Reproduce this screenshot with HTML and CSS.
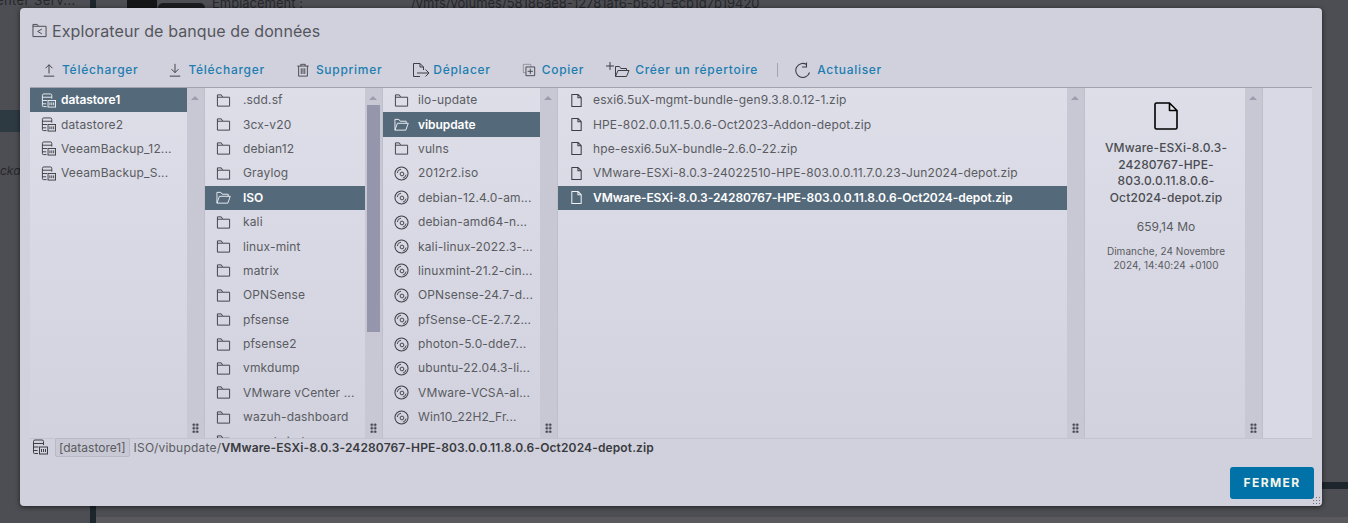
FILE: index.html
```html
<!DOCTYPE html>
<html lang="fr">
<head>
  <meta charset="UTF-8">
  <title>Explorateur de banque de données</title>
  <link rel="stylesheet" href="styles.css">
</head>
<body>
  <svg class="defs" width="0" height="0">
    <symbol id="i-folder" viewBox="0 0 16 16"><path d="M1.500 14V2h4.200l1.400 2.500h7.400V14z M1.500 4.500h5.600" fill="none" stroke="currentColor" stroke-width="1"/></symbol>
    <symbol id="i-open" viewBox="0 0 16 16"><path d="M1 14V2.500h4.200l1.400 2h6.400v2.200 M1 14l2.600-7.300h11.600L12.600 14z" fill="none" stroke="currentColor" stroke-width="1"/></symbol>
    <symbol id="i-disc" viewBox="0 0 16 16"><g fill="none" stroke="currentColor"><circle cx="8" cy="8" r="7" stroke-width="1.100"/><circle cx="8.500" cy="8.500" r="2" stroke-width="1"/><path d="M3.400 7.500A4.700 4.700 0 0 1 7.500 3.400 M12.900 9.200A4.600 4.600 0 0 1 9.500 12.900" stroke-width="1"/></g></symbol>
    <symbol id="i-file" viewBox="0 0 16 16"><path d="M3 1.500h6.500L13 5v9.500H3z M9.500 1.500V5H13" fill="none" stroke="currentColor" stroke-width="1.100" stroke-linejoin="round"/></symbol>
    <symbol id="i-bigfile" viewBox="0 0 24 28"><path d="M15 1.500V8h7.500z" fill="#eceded"/><path d="M2.500 1h13L23 8.500V25.500a1.500 1.500 0 0 1-1.500 1.500h-19A1.500 1.500 0 0 1 1 25.500V2.500A1.500 1.500 0 0 1 2.500 1z M15.500 1v7.500H23" fill="none" stroke="currentColor" stroke-width="1.600" stroke-linejoin="round"/></symbol>
    <symbol id="i-store" viewBox="0 0 16 16"><g fill="none" stroke="currentColor" stroke-width="1"><path d="M6 14.500H2.500a1 1 0 0 1-1-1V2.500a1.500 1.500 0 0 1 1.500-1.500h7a1.500 1.500 0 0 1 1.500 1.500V6"/><path d="M1.500 4.500h10 M1.500 8h5 M1.500 11.500h4"/><rect x="7.500" y="8" width="8" height="7"/><path d="M9.500 10v3 M11.500 10v3 M13.500 10v3"/></g></symbol>
    <symbol id="i-upload" viewBox="0 0 16 16"><path d="M8 12V2 M4 6l4-4 4 4 M2 15h12" fill="none" stroke="currentColor" stroke-width="1.100"/></symbol>
    <symbol id="i-download" viewBox="0 0 16 16"><path d="M8 1v10 M4 7l4 4 4-4 M2 15h12" fill="none" stroke="currentColor" stroke-width="1.100"/></symbol>
    <symbol id="i-trash" viewBox="0 0 16 16"><path d="M1.500 3.500h13 M5.500 3.500V1.500h5v2 M3 3.500V15h10V3.500 M6 6v6.500 M8 6v6.500 M10 6v6.500" fill="none" stroke="currentColor" stroke-width="1"/></symbol>
    <symbol id="i-move" viewBox="0 0 18 16"><path d="M8 14.500H1.500V1.500H8l3.500 3.500V8 M8 1.500V5h3.500 M5 11h12 M13.500 7.500L17 11l-3.500 3.500" fill="none" stroke="currentColor" stroke-width="1"/></symbol>
    <symbol id="i-copy" viewBox="0 0 16 16"><path d="M4 11H1.500V1.500H10V4" fill="none" stroke="#8d8e96" stroke-width="1"/><path d="M4.500 4.500h10v10h-10z M9.500 6.500v6 M6.500 9.500h6" fill="none" stroke="currentColor" stroke-width="1"/></symbol>
    <symbol id="i-newdir" viewBox="0 0 24 16"><path d="M4 0v8 M0 4h8" fill="none" stroke="currentColor" stroke-width="1"/><path d="M9.500 14.500V4.500h4l1.300 2h5.700v2 M9.500 14.500l2.500-6h11l-2.500 6z" fill="none" stroke="currentColor" stroke-width="1"/></symbol>
    <symbol id="i-refresh" viewBox="0 0 16 16"><path d="M14.500 10.500A7 7 0 1 1 11.500 2.500 M11.500 .5v4.500h-4.500" fill="none" stroke="currentColor" stroke-width="1.100"/></symbol>
    <symbol id="i-explorer" viewBox="0 0 16 16"><path d="M1 14.500V1.500h4.500l1.500 2h8v11z M1 3.500h6 M10.500 6.500L6 9l4.500 2.500" fill="none" stroke="currentColor" stroke-width="1"/></symbol>
  </svg>

  <div class="backdrop">
    <span class="bg-service">enter Serv...</span>
    <span class="bg-place">Emplacement :</span>
    <span class="bg-path">/vmfs/volumes/58186ae8-12781af6-b630-ecb1d7b19420</span>
    <span class="bg-icon"></span>
    <span class="bg-thumb"></span>
    <span class="bg-side"></span>
    <span class="bg-pack">ckag</span>
    <span class="bg-rail"></span>
    <span class="bg-strip"></span>
    <span class="bg-line"></span>
  </div>

  <div class="dialog">
    <h1 class="title"><svg class="ic-title"><use href="#i-explorer"/></svg>Explorateur de banque de données</h1>

    <div class="toolbar">
      <a class="tool tool-up"><svg class="ic"><use href="#i-upload"/></svg>Télécharger</a>
      <a class="tool tool-down"><svg class="ic"><use href="#i-download"/></svg>Télécharger</a>
      <a class="tool tool-del"><svg class="ic"><use href="#i-trash"/></svg>Supprimer</a>
      <a class="tool tool-move"><svg class="ic-wide"><use href="#i-move"/></svg>Déplacer</a>
      <a class="tool tool-copy"><svg class="ic"><use href="#i-copy"/></svg>Copier</a>
      <a class="tool tool-new"><svg class="ic-new"><use href="#i-newdir"/></svg>Créer un répertoire</a>
      <span class="sep"></span>
      <a class="tool tool-refresh"><svg class="ic-refresh"><use href="#i-refresh"/></svg>Actualiser</a>
    </div>

    <div class="browser">
      <div class="col col-stores">
        <ul class="list">
          <li class="row sel"><svg class="ic-row"><use href="#i-store"/></svg>datastore1</li>
          <li class="row"><svg class="ic-row"><use href="#i-store"/></svg>datastore2</li>
          <li class="row"><svg class="ic-row"><use href="#i-store"/></svg><span class="name">VeeamBackup_12...</span></li>
          <li class="row"><svg class="ic-row"><use href="#i-store"/></svg><span class="name">VeeamBackup_S...</span></li>
        </ul>
        <div class="scroll"><i class="arrow"></i><i class="grip"></i></div>
      </div>

      <div class="col col-dirs">
        <ul class="list">
          <li class="row"><svg class="ic-row"><use href="#i-folder"/></svg>.sdd.sf</li>
          <li class="row"><svg class="ic-row"><use href="#i-folder"/></svg>3cx-v20</li>
          <li class="row"><svg class="ic-row"><use href="#i-folder"/></svg>debian12</li>
          <li class="row"><svg class="ic-row"><use href="#i-folder"/></svg>Graylog</li>
          <li class="row sel"><svg class="ic-row"><use href="#i-open"/></svg>ISO</li>
          <li class="row"><svg class="ic-row"><use href="#i-folder"/></svg>kali</li>
          <li class="row"><svg class="ic-row"><use href="#i-folder"/></svg>linux-mint</li>
          <li class="row"><svg class="ic-row"><use href="#i-folder"/></svg>matrix</li>
          <li class="row"><svg class="ic-row"><use href="#i-folder"/></svg>OPNSense</li>
          <li class="row"><svg class="ic-row"><use href="#i-folder"/></svg>pfsense</li>
          <li class="row"><svg class="ic-row"><use href="#i-folder"/></svg>pfsense2</li>
          <li class="row"><svg class="ic-row"><use href="#i-folder"/></svg>vmkdump</li>
          <li class="row"><svg class="ic-row"><use href="#i-folder"/></svg><span class="name">VMware vCenter ...</span></li>
          <li class="row"><svg class="ic-row"><use href="#i-folder"/></svg>wazuh-dashboard</li>
          <li class="row"><svg class="ic-row"><use href="#i-folder"/></svg>wazuh-indexer</li>
        </ul>
        <div class="scroll"><i class="arrow"></i><i class="thumb"></i><i class="grip"></i></div>
      </div>

      <div class="col col-iso">
        <ul class="list">
          <li class="row"><svg class="ic-row"><use href="#i-folder"/></svg>ilo-update</li>
          <li class="row sel"><svg class="ic-row"><use href="#i-open"/></svg>vibupdate</li>
          <li class="row"><svg class="ic-row"><use href="#i-folder"/></svg>vulns</li>
          <li class="row"><svg class="ic-row"><use href="#i-disc"/></svg>2012r2.iso</li>
          <li class="row"><svg class="ic-row"><use href="#i-disc"/></svg><span class="name">debian-12.4.0-am...</span></li>
          <li class="row"><svg class="ic-row"><use href="#i-disc"/></svg><span class="name">debian-amd64-n...</span></li>
          <li class="row"><svg class="ic-row"><use href="#i-disc"/></svg><span class="name">kali-linux-2022.3-...</span></li>
          <li class="row"><svg class="ic-row"><use href="#i-disc"/></svg><span class="name">linuxmint-21.2-cin...</span></li>
          <li class="row"><svg class="ic-row"><use href="#i-disc"/></svg><span class="name">OPNsense-24.7-d...</span></li>
          <li class="row"><svg class="ic-row"><use href="#i-disc"/></svg><span class="name">pfSense-CE-2.7.2...</span></li>
          <li class="row"><svg class="ic-row"><use href="#i-disc"/></svg><span class="name">photon-5.0-dde7...</span></li>
          <li class="row"><svg class="ic-row"><use href="#i-disc"/></svg><span class="name">ubuntu-22.04.3-li...</span></li>
          <li class="row"><svg class="ic-row"><use href="#i-disc"/></svg><span class="name">VMware-VCSA-al...</span></li>
          <li class="row"><svg class="ic-row"><use href="#i-disc"/></svg><span class="name">Win10_22H2_Fr...</span></li>
        </ul>
        <div class="scroll"><i class="arrow"></i><i class="grip"></i></div>
      </div>

      <div class="col col-files">
        <ul class="list">
          <li class="row"><svg class="ic-row"><use href="#i-file"/></svg>esxi6.5uX-mgmt-bundle-gen9.3.8.0.12-1.zip</li>
          <li class="row"><svg class="ic-row"><use href="#i-file"/></svg>HPE-802.0.0.11.5.0.6-Oct2023-Addon-depot.zip</li>
          <li class="row"><svg class="ic-row"><use href="#i-file"/></svg>hpe-esxi6.5uX-bundle-2.6.0-22.zip</li>
          <li class="row"><svg class="ic-row"><use href="#i-file"/></svg>VMware-ESXi-8.0.3-24022510-HPE-803.0.0.11.7.0.23-Jun2024-depot.zip</li>
          <li class="row sel"><svg class="ic-row"><use href="#i-file"/></svg>VMware-ESXi-8.0.3-24280767-HPE-803.0.0.11.8.0.6-Oct2024-depot.zip</li>
        </ul>
        <div class="scroll"><i class="arrow"></i><i class="grip"></i></div>
      </div>

      <div class="col col-preview">
        <div class="preview">
          <svg class="ic-big"><use href="#i-bigfile"/></svg>
          <div class="pv-name">VMware-ESXi-8.0.3-24280767-HPE-803.0.0.11.8.0.6-Oct2024-depot.zip</div>
          <div class="pv-size">659,14 Mo</div>
          <div class="pv-date">Dimanche, 24 Novembre 2024, 14:40:24 +0100</div>
        </div>
        <div class="scroll"><i class="arrow"></i><i class="grip"></i></div>
      </div>

      <div class="col-rest"></div>
    </div>

    <div class="pathbar">
      <svg class="ic-path"><use href="#i-store"/></svg>
      <span class="tag">[datastore1]</span>
      <span class="path">ISO/vibupdate/<b>VMware-ESXi-8.0.3-24280767-HPE-803.0.0.11.8.0.6-Oct2024-depot.zip</b></span>
    </div>

    <div class="footer"><button class="close" type="button">FERMER</button></div>
    <i class="resize"></i>
  </div>
</body>
</html>
```

FILE: styles.css
```css
* {
  box-sizing: border-box;
}
html, body {
  margin: 0;
  height: 100%;
}
body {
  position: relative;
  overflow: hidden;
  background: #4d4e53;
  font-family: Inter, "Liberation Sans", sans-serif;
  color: #5a5b61;
}
.defs {
  position: absolute;
}

/* page behind the modal */
.backdrop span {
  position: absolute;
  white-space: nowrap;
}
.bg-service {
  left: -4px;
  top: -8px;
  font-size: 13px;
  letter-spacing: 0.4px;
  color: #26272b;
}
.bg-place {
  left: 212px;
  top: -5px;
  font-size: 13px;
  color: #26272b;
}
.bg-path {
  left: 411px;
  top: -5px;
  font-size: 13px;
  color: #26272b;
}
.bg-icon {
  left: 127px;
  top: 0;
  width: 30px;
  height: 8px;
  background: #141517;
}
.bg-thumb {
  left: 158px;
  top: 3px;
  width: 47px;
  height: 5px;
  border-radius: 5px 5px 0 0;
  background: #1b1c1f;
}
.bg-side {
  left: 0;
  top: 110px;
  width: 20px;
  height: 22px;
  background: #2e3a42;
}
.bg-pack {
  left: 0;
  top: 163px;
  font-size: 12px;
  font-style: italic;
  color: #26272b;
}
.bg-rail {
  left: 90px;
  top: 0;
  width: 6px;
  height: 523px;
  background: #1d262c;
}
.bg-strip {
  left: 96px;
  top: 517px;
  width: 1252px;
  height: 6px;
  background: #5a5a5e;
}
.bg-line {
  left: 1322px;
  top: 482px;
  width: 26px;
  height: 7px;
  background: #1d262c;
}

/* modal */
.dialog {
  position: absolute;
  left: 20px;
  top: 8px;
  width: 1302px;
  height: 498px;
  padding: 0 10px;
  background: #d0d1dd;
  border-radius: 4px;
  box-shadow: 0 1px 5px rgba(0, 0, 0, 0.6);
}
.title {
  display: flex;
  align-items: center;
  height: 45px;
  margin: 0;
  padding-left: 2px;
  font-size: 16px;
  font-weight: 400;
  letter-spacing: 0.1px;
  color: #55565c;
}
.ic-title {
  width: 15px;
  height: 15px;
  margin-right: 5px;
  color: #44454b;
}
.toolbar {
  display: flex;
  align-items: center;
  height: 33px;
  margin-bottom: 1px;
}
.tool {
  display: flex;
  align-items: center;
  font-size: 12px;
  font-weight: 500;
  letter-spacing: 0.72px;
  color: #1d7db0;
  white-space: nowrap;
}
.tool svg {
  color: #3d3e44;
}
.ic {
  width: 14px;
  height: 14px;
  margin-right: 6px;
}
.ic-wide {
  width: 18px;
  height: 16px;
  margin-right: 3px;
}
.ic-new {
  width: 24px;
  height: 16px;
  margin-right: 5px;
}
.ic-refresh {
  width: 16px;
  height: 16px;
  margin-right: 6px;
}
.tool-up { margin-left: 12px; }
.tool-down { margin-left: 30px; }
.tool-del { margin-left: 31px; }
.tool-move { margin-left: 30px; }
.tool-copy { margin-left: 31px; }
.tool-new { margin-left: 22px; }
.sep {
  width: 1px;
  height: 14px;
  margin: 0 17px 0 19px;
  background: #a3a4ae;
}
.browser {
  display: flex;
  height: 352px;
  border-top: 1px solid #a2a3ad;
  border-bottom: 1px solid #c3c4d0;
}
.col {
  display: flex;
  flex: none;
  overflow: hidden;
}
.col-stores { width: 175px; }
.col-dirs { width: 178px; }
.col-iso { width: 175px; }
.col-files { width: 527px; }
.col-preview { width: 178px; }
.col-rest {
  flex: 1;
  background: #d8d9e4;
}
.list {
  flex: 1;
  min-width: 0;
  margin: 0;
  padding: 0;
  list-style: none;
  background: linear-gradient(#dddee8, #d1d2de);
}
.row {
  display: flex;
  align-items: center;
  height: 24.4px;
  padding: 0 0 1px 11px;
  font-size: 12px;
  letter-spacing: 0.14px;
  white-space: nowrap;
}
.ic-row {
  flex: none;
  width: 15px;
  height: 15px;
  margin-right: 12px;
  margin-top: 1px;
  color: #3d3e44;
}
.col-stores .ic-row {
  margin-right: 5px;
}
.col-iso .ic-row {
  margin-right: 9px;
}
.col-files .ic-row {
  margin-right: 9px;
}
.row.sel {
  background: #54697a;
  color: #fff;
  font-weight: 600;
  letter-spacing: -0.07px;
}
.row.sel .ic-row {
  color: #eef0f4;
}
.scroll {
  position: relative;
  flex: none;
  width: 18px;
  background: #c7c8d3;
  border-right: 1px solid #bebfcb;
}
.arrow {
  position: absolute;
  left: 4px;
  top: 8px;
  border: 4px solid transparent;
  border-top: 0;
  border-bottom: 4px solid #9c9db0;
}
.thumb {
  position: absolute;
  left: 2px;
  top: 17px;
  width: 13px;
  height: 227px;
  background: #9595ab;
}
.grip {
  position: absolute;
  left: 5px;
  bottom: 5px;
  width: 7px;
  height: 10px;
  background: radial-gradient(circle, #44454f 1.2px, transparent 1.5px) 0 0 / 3.5px 3.5px;
}
.preview {
  flex: 1;
  padding: 14px 9px 0 11px;
  text-align: center;
  background: linear-gradient(#dddee8, #d1d2de);
}
.ic-big {
  display: block;
  width: 24px;
  height: 28px;
  margin: 0 auto 10px;
  color: #000;
}
.pv-name {
  font-size: 12px;
  font-weight: 500;
  line-height: 16.7px;
  letter-spacing: 0.15px;
  color: #4b4c52;
  overflow-wrap: anywhere;
}
.pv-size {
  margin-top: 12px;
  font-size: 12px;
}
.pv-date {
  margin-top: 10px;
  font-size: 10px;
  line-height: 14px;
  letter-spacing: 0.05px;
}
.pathbar {
  display: flex;
  align-items: center;
  height: 20px;
  margin-top: -2px;
  padding-left: 2px;
  font-size: 12px;
  letter-spacing: 0.23px;
}
.ic-path {
  width: 16px;
  height: 16px;
  margin-right: 7px;
  color: #3d3e44;
}
.tag {
  flex: none;
  padding: 0 3px;
  height: 19px;
  line-height: 17px;
  margin-right: 4px;
  letter-spacing: 0;
  border: 1px solid #b8b9c4;
  border-radius: 2px;
  background: #c8c9d4;
}
.path b {
  font-weight: 600;
  letter-spacing: 0.13px;
  color: #3a3b40;
}
.footer {
  display: flex;
  justify-content: flex-end;
  padding-top: 10px;
  margin-right: -2px;
}
.close {
  width: 84px;
  height: 32px;
  padding-bottom: 2px;
  border: 0;
  border-radius: 3px;
  background: #0072a8;
  color: #f5f5ea;
  font-family: Inter, "Liberation Sans", sans-serif;
  font-size: 12px;
  font-weight: 700;
  letter-spacing: 1.4px;
}
.resize {
  position: absolute;
  right: 1px;
  bottom: 1px;
  width: 9px;
  height: 9px;
  background: radial-gradient(circle, #6f7079 0.8px, transparent 1px) 0 0 / 3px 3px;
}
```
